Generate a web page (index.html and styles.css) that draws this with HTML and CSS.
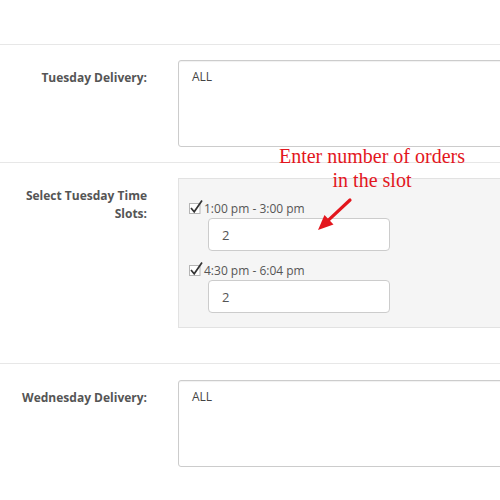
FILE: index.html
```html
<!DOCTYPE html>
<html>
<head>
    <title>Delivery settings</title>
    <link rel="stylesheet" href="styles.css">
</head>
<body>
    <div class="page">
        <div class="top-space"></div>

        <div class="form-row">
            <label class="row-label">Tuesday Delivery:</label>
            <div class="row-field">
                <textarea class="area">ALL</textarea>
            </div>
        </div>

        <div class="form-row slots-row">
            <label class="row-label">Select Tuesday Time Slots:</label>
            <div class="row-field">
                <div class="slot-box">
                    <div class="slot">
                        <div class="slot-check">
                            <svg class="tick" width="15" height="15" viewBox="0 0 15 15"><rect x="0.5" y="4.5" width="10.5" height="10" fill="#fff" stroke="#b5b5b5"/><path d="M2 9 L5.2 12.8 L13 1.5" fill="none" stroke="#333" stroke-width="1.7"/></svg>
                            <span>1:00 pm - 3:00 pm</span>
                        </div>
                        <input type="text" class="slot-input" value="2">
                    </div>
                    <div class="slot">
                        <div class="slot-check">
                            <svg class="tick" width="15" height="15" viewBox="0 0 15 15"><rect x="0.5" y="4.5" width="10.5" height="10" fill="#fff" stroke="#b5b5b5"/><path d="M2 9 L5.2 12.8 L13 1.5" fill="none" stroke="#333" stroke-width="1.7"/></svg>
                            <span>4:30 pm - 6:04 pm</span>
                        </div>
                        <input type="text" class="slot-input" value="2">
                    </div>
                    <div class="slot">
                        <div class="slot-check">
                            <svg class="tick" width="15" height="15" viewBox="0 0 15 15"><rect x="0.5" y="4.5" width="10.5" height="10" fill="#fff" stroke="#b5b5b5"/></svg>
                            <span></span>
                        </div>
                    </div>
                </div>
            </div>
        </div>

        <div class="form-row last-row">
            <label class="row-label">Wednesday Delivery:</label>
            <div class="row-field">
                <textarea class="area">ALL</textarea>
            </div>
        </div>

        <div class="note">Enter number of orders<br>in the slot</div>
        <svg class="note-arrow" width="48" height="44" viewBox="0 0 48 44">
            <line x1="40" y1="8" x2="19" y2="27.7" stroke="#e3161d" stroke-width="3.2" stroke-linecap="round"/>
            <polygon points="8,38 23.5,32.5 14.5,23" fill="#e3161d"/>
        </svg>
    </div>
</body>
</html>
```

FILE: styles.css
```css
body {
    margin: 0;
    background: #fff;
    font-family: "Open Sans", "Liberation Sans", sans-serif;
    overflow: hidden;
}

.page {
    position: relative;
    width: 500px;
    height: 500px;
    overflow: hidden;
}

.top-space {
    height: 44px;
}

.form-row {
    display: flex;
    gap: 31px;
    border-top: 1px solid #e7e7e7;
    padding: 15px 0;
}

.slots-row {
    padding-bottom: 35px;
}

.last-row {
    padding-top: 16px;
}

.row-label {
    width: 147px;
    flex-shrink: 0;
    text-align: right;
    font-weight: bold;
    font-size: 12px;
    line-height: 18px;
    color: #555;
    padding-top: 9px;
    box-sizing: border-box;
}

.row-field {
    width: 345px;
    flex-shrink: 0;
}

.area {
    display: block;
    width: 100%;
    height: 87px;
    box-sizing: border-box;
    border: 1px solid #ccc;
    border-radius: 3px;
    box-shadow: inset 0 1px 1px rgba(0, 0, 0, 0.06);
    padding: 7px 13px;
    font-family: "Open Sans", "Liberation Sans", sans-serif;
    font-size: 12px;
    line-height: 18px;
    color: #444;
    resize: none;
}

.slot-box {
    height: 150px;
    box-sizing: border-box;
    background: #f5f5f5;
    border: 1px solid #e2e2e2;
    padding: 20px 10px 0;
    overflow: hidden;
}

.slot {
    margin-bottom: 10px;
}

.slot-check {
    display: flex;
    align-items: center;
    gap: 0;
    height: 18px;
    font-size: 12px;
    color: #555;
}

.tick {
    display: block;
    margin-top: -4px;
}

.slot-input {
    display: block;
    margin: 1px 0 0 19px;
    width: 182px;
    height: 33px;
    box-sizing: border-box;
    border: 1px solid #ccc;
    border-radius: 4px;
    background: #fff;
    padding: 0 13px;
    font-family: "Open Sans", "Liberation Sans", sans-serif;
    font-size: 13px;
    color: #555;
}

.note {
    position: absolute;
    left: 262px;
    top: 144px;
    width: 220px;
    text-align: center;
    font-family: "Liberation Serif", serif;
    font-size: 20px;
    line-height: 24px;
    color: #e3161d;
}

.note-arrow {
    position: absolute;
    left: 310px;
    top: 192px;
}
```
